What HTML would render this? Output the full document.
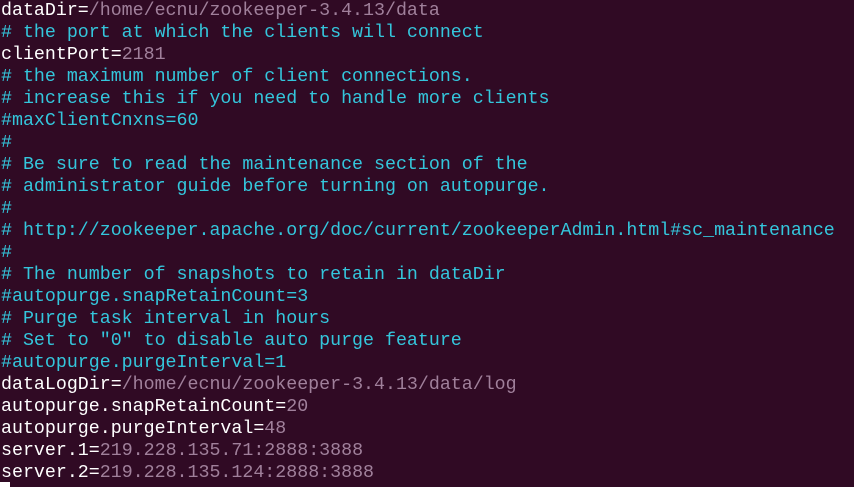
<!DOCTYPE html>
<html><head><meta charset="utf-8"><style>
html,body{margin:0;padding:0;background:#300a24;width:854px;height:487px;overflow:hidden}
pre{margin:0;position:absolute;left:1px;top:0px;font-family:"Liberation Mono","DejaVu Sans Mono",monospace;font-size:18.3px;line-height:22px;color:#ffffff;letter-spacing:0}
.c{color:#34c6dc}
.v{color:#a0809b}
.cur{position:absolute;left:0;top:482px;width:10px;height:5px;background:#fff}
</style></head><body>
<pre>dataDir=<span class="v">/home/ecnu/zookeeper-3.4.13/data</span>
<span class="c"># the port at which the clients will connect</span>
clientPort=<span class="v">2181</span>
<span class="c"># the maximum number of client connections.</span>
<span class="c"># increase this if you need to handle more clients</span>
<span class="c">#maxClientCnxns=60</span>
<span class="c">#</span>
<span class="c"># Be sure to read the maintenance section of the</span>
<span class="c"># administrator guide before turning on autopurge.</span>
<span class="c">#</span>
<span class="c"># http://zookeeper.apache.org/doc/current/zookeeperAdmin.html#sc_maintenance</span>
<span class="c">#</span>
<span class="c"># The number of snapshots to retain in dataDir</span>
<span class="c">#autopurge.snapRetainCount=3</span>
<span class="c"># Purge task interval in hours</span>
<span class="c"># Set to "0" to disable auto purge feature</span>
<span class="c">#autopurge.purgeInterval=1</span>
dataLogDir=<span class="v">/home/ecnu/zookeeper-3.4.13/data/log</span>
autopurge.snapRetainCount=<span class="v">20</span>
autopurge.purgeInterval=<span class="v">48</span>
server.1=<span class="v">219.228.135.71:2888:3888</span>
server.2=<span class="v">219.228.135.124:2888:3888</span></pre>
<div class="cur"></div>
</body></html>
